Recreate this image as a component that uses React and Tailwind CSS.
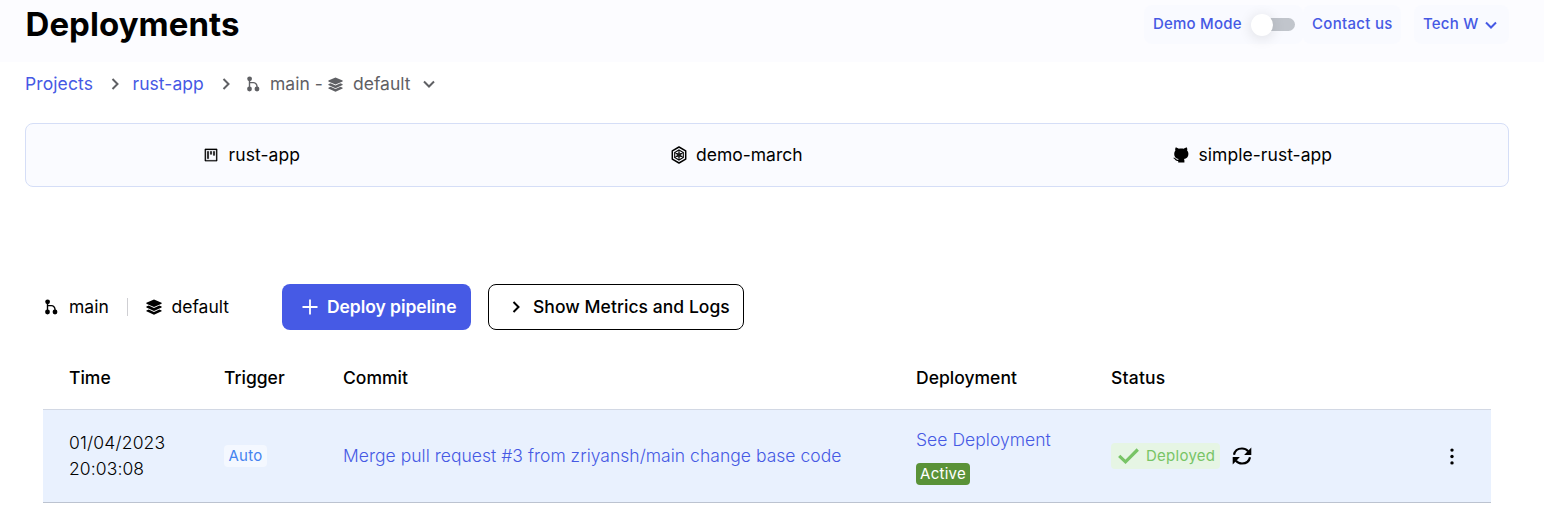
import React from "react";
import { AiOutlineProject } from "react-icons/ai";

function Branch({ className }) {
  return (
    <svg className={className} viewBox="0 0 14 16" fill="currentColor" stroke="currentColor">
      <circle cx="3.6" cy="2.8" r="2.4" stroke="none" />
      <circle cx="3.5" cy="13" r="2.4" stroke="none" />
      <circle cx="11" cy="13" r="2.4" stroke="none" />
      <path d="M3.500 3v10M3.500 6.600h3.900a3.600 3.600 0 0 1 3.600 3.600v2" fill="none" strokeWidth="1.400" />
    </svg>
  );
}

function Chevron({ className, down }) {
  return (
    <svg className={className} viewBox="0 0 12 12" fill="none" stroke="currentColor" strokeWidth="2">
      <path d={down ? "M1 3.500l5 5 5-5" : "M3.500 1l5 5-5 5"} />
    </svg>
  );
}

function Layers({ className }) {
  return (
    <svg className={className} viewBox="0 0 16 16" fill="currentColor">
      <path d="M8 .4L15.600 3.800v1L8 8.100.4 4.800v-1z" />
      <path d="M.4 7.600l2.300-1L8 9.100l5.300-2.500 2.300 1v.9L8 12 .4 8.500z" />
      <path d="M.4 11.400l2.300-1L8 12.900l5.300-2.500 2.300 1v.9L8 15.800.4 12.300z" />
    </svg>
  );
}

function Plus({ className }) {
  return (
    <svg className={className} viewBox="0 0 18 18" fill="none" stroke="currentColor" strokeWidth="1.800">
      <path d="M9 1.500v15M1.500 9h15" />
    </svg>
  );
}

function Octocat({ className }) {
  return (
    <svg className={className} viewBox="0 0 16 16" fill="currentColor">
      <path d="M2.600.4C3.800.4 4.900 1.100 5.800 1.700c1.500-.3 3.400-.3 4.900 0C11.600 1.100 12.700.4 13.900.4c.5 1.200.5 2.300.2 3.200.9 1 1.300 2.100 1.300 3.400 0 3.200-1.800 4.600-4.400 5 .3.500.4 1 .4 1.600V15.600H5.200v-1.700C2.900 14.200 2.300 13 1.600 12 1.200 11.400.7 11.200.2 10.900c1.300-.5 2.200.3 2.900 1.200.5.600 1 .8 2.200.6.1-.3.200-.5.300-.7C3 11.600 1.200 10.200 1.200 7c0-1.300.4-2.400 1.200-3.400-.3-.9-.3-2 .2-3.200z" />
    </svg>
  );
}

function Cluster({ className }) {
  return (
    <svg className={className} viewBox="0 0 16 18" fill="none" stroke="currentColor">
      <path d="M8 1l6.700 3.900v8.200L8 17l-6.700-3.900V4.900z" strokeWidth="1.500" strokeLinejoin="round" />
      <path d="M8 4l4.300 2.500v5L8 14l-4.300-2.500v-5z" strokeWidth="1.100" />
      <circle cx="8" cy="9" r="2" strokeWidth="1" />
      <path d="M8 4v10M3.700 6.500l8.600 5M3.700 11.500l8.600-5" strokeWidth="1" />
    </svg>
  );
}

function Sync({ className }) {
  return (
    <svg className={className} viewBox="0 0 20 20" fill="currentColor">
      <path d="M2 8.800C2.800 4.800 6 2.500 10 2.500c2.600 0 4.600.9 6.200 2.700M18 11.200c-.8 4-4 6.300-8 6.300-2.600 0-4.600-.9-6.200-2.700" fill="none" stroke="currentColor" strokeWidth="2.200" />
      <path d="M19.300 1.600v7.300h-7.200zM.7 18.400v-7.300h7.200z" />
    </svg>
  );
}

export default function App() {
  return (
    <div className="h-[517px] w-[1544px] overflow-hidden bg-white font-['Inter',sans-serif] text-black">
      <header className="flex h-[62px] justify-between bg-[#fcfcff] pl-[25.500px] pr-[35px]">
        <h1 className="mt-[4px] text-[33px] font-bold leading-[40px] tracking-[0.05px]">Deployments</h1>
        <div className="mt-[5px] flex h-[39px] text-[15px] font-medium tracking-[0.22px] text-[#4659e4]">
          <div className="flex w-[159px] items-center rounded-lg bg-[#f9faff] pl-[9px]">
            <span className="w-[98px] whitespace-nowrap">Demo Mode</span>
            <span className="flex h-[13px] w-[44px] items-center rounded-full bg-gradient-to-r from-transparent from-30% to-[#c1c5cc] to-30%">
              <span className="size-[22px] shrink-0 rounded-full bg-white shadow-[0_2px_14px_rgba(0,0,0,0.12)]" />
            </span>
          </div>
          <div className="flex w-[98px] items-center whitespace-nowrap rounded-lg bg-[#f9faff] pl-[9px] tracking-[0.3px]">Contact us</div>
          <div className="ml-[13px] flex w-[95px] items-center rounded-lg bg-[#f9faff] pl-[9px]">
            <span className="w-[62px] whitespace-nowrap">Tech W</span>
            <Chevron down className="size-[12px]" />
          </div>
        </div>
      </header>

      <nav className="flex h-[44px] items-center pl-[25px] text-[17.500px] text-[#5f6064]">
        <span className="w-[84px] tracking-[0.1px] text-[#4659e4]">Projects</span>
        <Chevron className="mr-[11px] size-[12px]" />
        <span className="w-[88px] pl-[0.5px] tracking-[0.06px] text-[#4659e4]">rust-app</span>
        <Chevron className="mr-[14px] size-[12px]" />
        <Branch className="mr-[10px] h-[16px] w-[14px]" />
        <span className="w-[58px] whitespace-nowrap">main -</span>
        <Layers className="mr-[10px] size-[15px]" />
        <span className="w-[70px]">default</span>
        <Chevron down className="size-[12px]" />
      </nav>

      <section className="ml-[25px] mt-[17px] flex h-[64px] w-[1484px] items-center rounded-lg border border-[#d5def7] bg-[#fafbff] text-[17.500px]">
        <div className="flex w-[468px] items-center pl-[177px]">
          <AiOutlineProject className="mr-[9px] size-[16px] stroke-current stroke-[12]" />
          <span className="pl-[0.5px] tracking-[0.1px]">rust-app</span>
        </div>
        <div className="flex w-[502px] items-center pl-[177px]">
          <Cluster className="mr-[9px] h-[18px] w-[16px]" />
          <span>demo-march</span>
        </div>
        <div className="flex items-center pl-[177px]">
          <Octocat className="mr-[9.500px] size-[16px]" />
          <span className="tracking-[0.05px]">simple-rust-app</span>
        </div>
      </section>

      <div className="mt-[97px] flex h-[46px] items-center pl-[44px] text-[17.500px]">
        <Branch className="mr-[11px] h-[16px] w-[14px]" />
        <span className="w-[58px]">main</span>
        <span className="mr-[18px] h-[18px] w-px bg-[#cfcfd3]" />
        <Layers className="mr-[9.500px] size-[16px]" />
        <span className="w-[110.500px]">default</span>
        <button className="flex h-[46px] w-[189px] items-center rounded-lg bg-[#465ae5] pl-[19px] font-semibold text-white">
          <Plus className="mr-[8px] size-[18px]" />
          <span className="whitespace-nowrap tracking-[-0.07px]">Deploy pipeline</span>
        </button>
        <button className="ml-[17px] flex h-[46px] w-[256px] items-center rounded-lg border border-black pl-[21px] font-medium">
          <Chevron className="mr-[11px] size-[12px]" />
          <span className="whitespace-nowrap tracking-[0.05px]">Show Metrics and Logs</span>
        </button>
      </div>

      <div className="ml-[43px] mt-[16px] w-[1448px]">
        <div className="grid h-[63px] grid-cols-[155px_119px_573px_195px_1fr] items-center pl-[26px] pt-[2px] text-[17.500px] font-medium tracking-[0.02px]">
          <span>Time</span>
          <span>Trigger</span>
          <span>Commit</span>
          <span>Deployment</span>
          <span className="tracking-[0.2px]">Status</span>
        </div>
        <div className="grid h-[94px] grid-cols-[155px_119px_573px_195px_321px_1fr] items-center border-y border-t-[#d2d8e4] border-b-[#bcc3d0] bg-[#e9f1fe] pl-[26px] text-[17.500px]">
          <div className="font-light leading-[26px]">
            <div className="tracking-[0.17px]">01/04/2023</div>
            <div className="tracking-[0.1px]">20:03:08</div>
          </div>
          <span className="flex h-[22px] w-[43px] items-center justify-center rounded-sm bg-[#f4f8ff] text-[15px] tracking-[0.3px] text-[#4583f0]">Auto</span>
          <span className="whitespace-nowrap font-light tracking-[0.025px] text-[#4659e4]">Merge pull request #3 from zriyansh/main change base code</span>
          <div className="flex flex-col items-start">
            <span className="font-light leading-[26px] tracking-[0.04px] text-[#4659e4]">See Deployment</span>
            <span className="mb-px mt-[10px] flex h-[22px] w-[54px] items-center justify-center rounded-sm bg-[#5a9238] pt-px text-[15px] tracking-[0.25px] text-white">Active</span>
          </div>
          <div className="flex items-center">
            <span className="flex h-[26px] w-[109px] items-center rounded-sm bg-[#e6f5e4] pl-[7px] text-[15px] tracking-[0.26px] text-[#78c466]">
              <svg className="mr-[7px] h-[16px] w-[21px]" viewBox="0 0 21 16" fill="none" stroke="currentColor" strokeWidth="3.200">
                <path d="M1.200 7.800l6.300 6L19.800 1.500" />
              </svg>
              Deployed
            </span>
            <Sync className="ml-[11.500px] size-[20px]" />
          </div>
          <svg className="ml-[17px] h-[18px] w-[6px]" viewBox="0 0 6 18" fill="currentColor">
            <circle cx="3" cy="3.100" r="1.700" />
            <circle cx="3" cy="9.500" r="1.700" />
            <circle cx="3" cy="15.900" r="1.700" />
          </svg>
        </div>
      </div>
    </div>
  );
}
